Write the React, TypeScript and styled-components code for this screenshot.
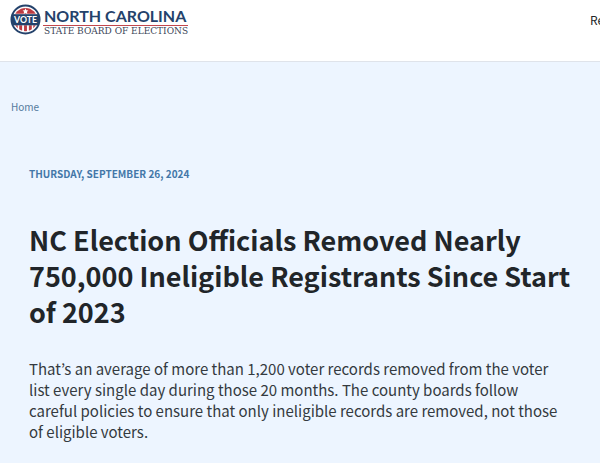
import React from "react";
import styled, { createGlobalStyle } from "styled-components";

const GlobalStyle = createGlobalStyle`
  *, *::before, *::after { box-sizing: border-box; }
  body {
    margin: 0;
    background: #edf5ff;
    color: #212529;
    font-family: "Noto Sans CJK KR", "Source Sans 3", "Open Sans", sans-serif;
    overflow-x: hidden;
  }
`;

const Header = styled.header`
  display: flex;
  align-items: flex-start;
  justify-content: space-between;
  min-height: 62px;
  padding: 4px 0 0 10px;
  background: #ffffff;
  border-bottom: 1px solid #dfe3ea;
`;

const Brand = styled.a`
  display: flex;
  align-items: flex-start;
  gap: 2px;
  text-decoration: none;
`;

const Seal = styled.svg`
  display: block;
  width: 31px;
  height: 31px;
`;

const BrandText = styled.span`
  display: flex;
  flex-direction: column;
  padding-top: 4px;
`;

const BrandName = styled.span`
  padding: 0 2px 1px 1px;
  border-bottom: 1px solid #c2474c;
  color: #24426b;
  font: 700 16px/16px Lato, sans-serif;
  white-space: nowrap;
`;

const BrandUnit = styled.span`
  padding-left: 1px;
  color: #3c4658;
  font: 400 9px/10px "DejaVu Serif", serif;
  white-space: nowrap;
`;

const Nav = styled.nav`
  width: 10px;
  padding-top: 2px;
  overflow: hidden;
`;

const NavLink = styled.a`
  color: #212529;
  font-size: 12px;
  line-height: 20px;
  text-decoration: none;
`;

const Breadcrumb = styled.nav`
  padding: 35px 11px 0;
  font-size: 10px;
  line-height: 20px;
`;

const Crumb = styled.a`
  color: #557b9e;
  text-decoration: none;
`;

const Article = styled.main`
  padding: 47px 24px 20px 29px;
`;

const PublishDate = styled.time`
  display: block;
  color: #4377a8;
  font-size: 10px;
  font-weight: 700;
  line-height: 20px;
  text-transform: uppercase;
`;

const Title = styled.h1`
  margin: 38px 0 0;
  font-size: 27px;
  font-weight: 700;
  line-height: 36px;
`;

const Summary = styled.p`
  max-width: 536px;
  margin: 28px 0 0;
  color: #343a40;
  font-size: 15px;
  line-height: 21px;
`;

const VoteSeal = () => (
  <Seal viewBox="0 0 32 32" aria-hidden="true">
    <defs>
      <clipPath id="seal-disc">
        <circle cx="16" cy="16" r="12" />
      </clipPath>
    </defs>
    <circle cx="16" cy="16" r="14.5" fill="#fff" stroke="#24426b" strokeWidth="2" />
    <g clipPath="url(#seal-disc)">
      <path d="M3 3h26v7H3z" fill="#bd3b42" />
      <path
        d="M5 22h3v8H5zM9.500 22h3v8h-3zM14.500 22h3v8h-3zM19.500 22h3v8h-3zM24 22h3v8h-3z"
        fill="#bd3b42"
      />
    </g>
    <path
      d="M16 4.500l.9 1.900 2.100.3-1.500 1.400.4 2.100-1.900-1-1.900 1 .4-2.100L13 6.700l2.100-.3z"
      fill="#fff"
    />
    <rect x="2" y="10.500" width="28" height="11.500" fill="#24426b" />
    <text
      x="16"
      y="19.500"
      textAnchor="middle"
      fill="#fff"
      fontFamily="Lato, sans-serif"
      fontSize="9"
      fontWeight="700"
    >
      VOTE
    </text>
  </Seal>
);

export default function App() {
  return (
    <>
      <GlobalStyle />
      <Header>
        <Brand href="#home">
          <VoteSeal />
          <BrandText>
            <BrandName>NORTH CAROLINA</BrandName>
            <BrandUnit>STATE BOARD OF ELECTIONS</BrandUnit>
          </BrandText>
        </Brand>
        <Nav aria-label="Main">
          <NavLink href="#re">Re</NavLink>
        </Nav>
      </Header>
      <Breadcrumb aria-label="Breadcrumb">
        <Crumb href="#home">Home</Crumb>
      </Breadcrumb>
      <Article>
        <PublishDate dateTime="2024-09-26">Thursday, September 26, 2024</PublishDate>
        <Title>
          NC Election Officials Removed Nearly 750,000 Ineligible Registrants Since Start of 2023
        </Title>
        <Summary>
          That’s an average of more than 1,200 voter records removed from the voter list every
          single day during those 20 months. The county boards follow careful policies to ensure
          that only ineligible records are removed, not those of eligible voters.
        </Summary>
      </Article>
    </>
  );
}
